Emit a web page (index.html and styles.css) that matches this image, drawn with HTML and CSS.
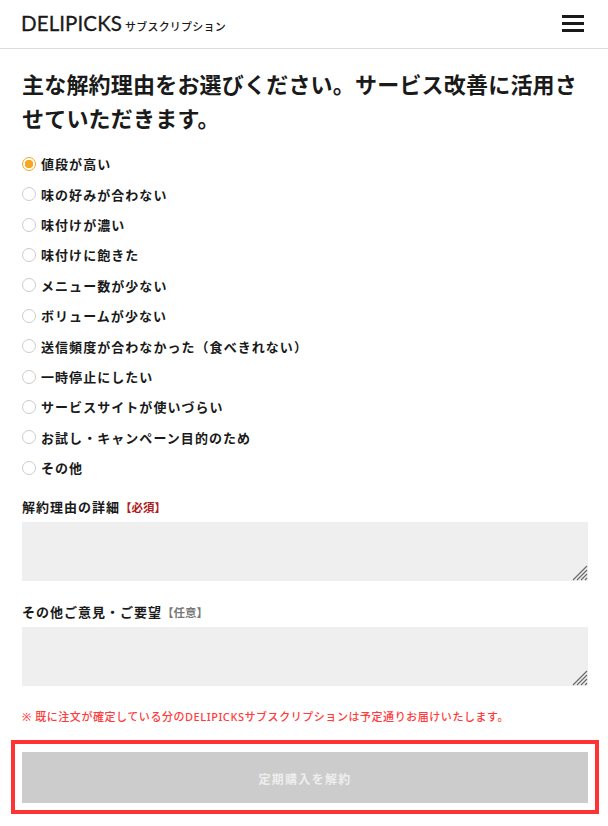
FILE: index.html
```html
<!DOCTYPE html>
<html lang="ja">
<head>
    <meta charset="UTF-8">
    <meta name="viewport" content="width=device-width, initial-scale=1.0">
    <title>DELIPICKS サブスクリプション 解約</title>
    <link rel="stylesheet" href="styles.css">
</head>
<body>
    <header class="site-header">
        <a href="#" class="logo">
            <span class="logo-main">DELIPICKS</span>
            <span class="logo-sub">サブスクリプション</span>
        </a>
        <button type="button" class="menu-button" aria-label="メニュー">
            <span></span>
            <span></span>
            <span></span>
        </button>
    </header>

    <main class="cancel-form">
        <h1>主な解約理由をお選びください。サービス改善に活用させていただきます。</h1>

        <div class="reason-list">
            <label class="reason"><input type="radio" name="reason" checked>値段が高い</label>
            <label class="reason"><input type="radio" name="reason">味の好みが合わない</label>
            <label class="reason"><input type="radio" name="reason">味付けが濃い</label>
            <label class="reason"><input type="radio" name="reason">味付けに飽きた</label>
            <label class="reason"><input type="radio" name="reason">メニュー数が少ない</label>
            <label class="reason"><input type="radio" name="reason">ボリュームが少ない</label>
            <label class="reason"><input type="radio" name="reason">送信頻度が合わなかった（食べきれない）</label>
            <label class="reason"><input type="radio" name="reason">一時停止にしたい</label>
            <label class="reason"><input type="radio" name="reason">サービスサイトが使いづらい</label>
            <label class="reason"><input type="radio" name="reason">お試し・キャンペーン目的のため</label>
            <label class="reason"><input type="radio" name="reason">その他</label>
        </div>

        <div class="field">
            <label class="field-label">解約理由の詳細<span class="required">【必須】</span></label>
            <div class="textarea-wrap">
                <textarea></textarea>
                <svg class="grip" width="16" height="16" viewBox="0 0 16 16">
                    <path d="M1 15 15 1M5 15 15 5M9 15 15 9M13 15 15 13" />
                </svg>
            </div>
        </div>

        <div class="field">
            <label class="field-label">その他ご意見・ご要望<span class="optional">【任意】</span></label>
            <div class="textarea-wrap">
                <textarea></textarea>
                <svg class="grip" width="16" height="16" viewBox="0 0 16 16">
                    <path d="M1 15 15 1M5 15 15 5M9 15 15 9M13 15 15 13" />
                </svg>
            </div>
        </div>

        <p class="notice">※ 既に注文が確定している分のDELIPICKSサブスクリプションは予定通りお届けいたします。</p>

        <div class="submit-box">
            <button type="button" class="submit-button">定期購入を解約</button>
        </div>
    </main>
</body>
</html>
```

FILE: styles.css
```css
* {
    margin: 0;
    padding: 0;
    box-sizing: border-box;
}

body {
    font-family: "Noto Sans", "Noto Sans CJK JP", sans-serif;
    background-color: #fff;
    color: #1a1a1a;
}

.site-header {
    height: 49px;
    padding: 0 24px 2px 21px;
    display: flex;
    align-items: center;
    justify-content: space-between;
    border-bottom: 1px solid #ddd;
}

.logo {
    display: flex;
    align-items: baseline;
    gap: 3px;
    color: #1a1a1a;
    text-decoration: none;
}

.logo-main {
    font-family: Lato, sans-serif;
    font-size: 20.5px;
    font-weight: 400;
    letter-spacing: 0.1px;
    -webkit-text-stroke: 0.3px #1a1a1a;
}

.logo-sub {
    font-size: 11px;
    font-weight: 500;
    letter-spacing: 0.2px;
}

.menu-button {
    width: 22px;
    display: flex;
    flex-direction: column;
    gap: 4px;
    background: none;
    border: none;
}

.menu-button span {
    height: 3px;
    background: #1a1a1a;
}

.cancel-form {
    padding: 18px 20px 0 22px;
}

h1 {
    font-size: 22px;
    line-height: 34px;
    font-weight: 700;
    letter-spacing: 0.2px;
}

.reason-list {
    margin-top: 13.6px;
    display: flex;
    flex-direction: column;
}

.reason {
    height: 30.4px;
    display: flex;
    align-items: center;
    gap: 5px;
    font-size: 13px;
    font-weight: 700;
    letter-spacing: 1.05px;
}

.reason input {
    appearance: none;
    width: 14px;
    height: 14px;
    border: 1px solid #ccc;
    border-radius: 50%;
    background: #fff;
}

.reason input:checked {
    border-color: #f5a623;
    background: radial-gradient(circle, #f5a623 0 4px, #fff 4.5px);
}

.field {
    margin-top: 13.4px;
}

.field + .field {
    margin-top: 20px;
}

.field-label {
    display: block;
    height: 26px;
    line-height: 22px;
    font-size: 13px;
    font-weight: 700;
    letter-spacing: 1px;
}

.required,
.optional {
    font-size: 11.5px;
    letter-spacing: 0;
}

.required {
    color: #b01c1c;
}

.optional {
    color: #777;
}

.textarea-wrap {
    position: relative;
    height: 59px;
}

.textarea-wrap textarea {
    display: block;
    width: 100%;
    height: 100%;
    background: #efefef;
    border: none;
    resize: none;
}

.grip {
    position: absolute;
    right: 0;
    bottom: 0;
    fill: none;
    stroke: #6a6a6a;
    stroke-width: 1.2;
}

.notice {
    margin-top: 23px;
    font-size: 11px;
    line-height: 16px;
    font-weight: 500;
    color: #ff3b3b;
    letter-spacing: 0.55px;
}

.submit-box {
    margin: 15px -11px 0 -11px;
    padding: 8px 7px 7px;
    border: 4px solid #ff3333;
}

.submit-button {
    display: block;
    width: 100%;
    height: 51px;
    padding-top: 2px;
    background: #ccc;
    border: none;
    color: #eee;
    font-family: inherit;
    font-size: 12px;
    font-weight: 700;
    letter-spacing: 1.3px;
}
```
